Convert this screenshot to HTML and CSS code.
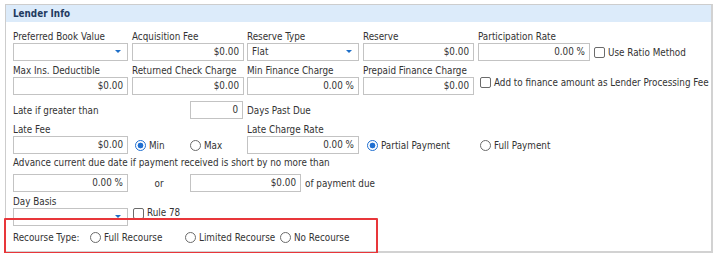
FILE: index.html
```html
<!DOCTYPE html>
<html>
<head>
<meta charset="utf-8">
<link rel="stylesheet" href="styles.css">
</head>
<body>
<div class="panel">
  <div class="panel-head">Lender Info</div>
  <div class="panel-body">
    <div class="grid5 row1">
      <div class="field"><div class="lbl">Preferred Book Value</div><div class="input select w115"><span class="arrow"></span></div></div>
      <div class="field"><div class="lbl">Acquisition Fee</div><div class="input num w112">$0.00</div></div>
      <div class="field"><div class="lbl">Reserve Type</div><div class="input select w112">Flat<span class="arrow"></span></div></div>
      <div class="field"><div class="lbl">Reserve</div><div class="input num w111">$0.00</div></div>
      <div class="field"><div class="lbl">Participation Rate</div><div class="inline"><div class="input num w112">0.00 %</div><span class="check ml4"></span><span class="opt">Use Ratio Method</span></div></div>
    </div>
    <div class="grid5 row2">
      <div class="field"><div class="lbl">Max Ins. Deductible</div><div class="input num w115">$0.00</div></div>
      <div class="field"><div class="lbl">Returned Check Charge</div><div class="input num w112">$0.00</div></div>
      <div class="field"><div class="lbl">Min Finance Charge</div><div class="input num w112">0.00 %</div></div>
      <div class="field"><div class="lbl">Prepaid Finance Charge</div><div class="input num w111">$0.00</div></div>
      <div class="field"><div class="lbl">&nbsp;</div><div class="inline"><span class="check ml2"></span><span class="opt">Add to finance amount as Lender Processing Fee</span></div></div>
    </div>
    <div class="inline row3">
      <span class="lead">Late if greater than</span>
      <div class="input num w53">0</div>
      <span class="after">Days Past Due</span>
    </div>
    <div class="grid5 row4">
      <div class="field"><div class="lbl">Late Fee</div><div class="input num w115">$0.00</div></div>
      <div class="radios">
        <span class="radio on ml3"></span><span class="opt w41">Min</span>
        <span class="radio"></span><span class="opt">Max</span>
      </div>
      <div class="field"><div class="lbl">Late Charge Rate</div><div class="input num w112">0.00 %</div></div>
      <div class="radios"><span class="radio on ml4"></span><span class="opt">Partial Payment</span></div>
      <div class="radios"><span class="radio ml2"></span><span class="opt">Full Payment</span></div>
    </div>
    <div class="lbl row5">Advance current due date if payment received is short by no more than</div>
    <div class="inline row5b">
      <div class="input num w115">0.00 %</div>
      <span class="or">or</span>
      <div class="input num w111">$0.00</div>
      <span class="after">of payment due</span>
    </div>
    <div class="lbl row6">Day Basis</div>
    <div class="inline top">
      <div class="input select w115"><span class="arrow"></span></div>
      <span class="check ml5"></span><span class="opt lh10">Rule 78</span>
    </div>
    <div class="inline row7">
      <span class="rt">Recourse Type:</span>
      <span class="radio"></span><span class="opt w81">Full Recourse</span>
      <span class="radio"></span><span class="opt w81">Limited Recourse</span>
      <span class="radio"></span><span class="opt">No Recourse</span>
    </div>
  </div>
  <div class="highlight"></div>
</div>
</body>
</html>
```
FILE: styles.css
```css
* { box-sizing: border-box; }
html, body { margin: 0; padding: 0; background: #fff; }
body {
  font-family: "DejaVu Sans Condensed", "DejaVu Sans", sans-serif;
  font-size: 9.8px;
  color: #333;
}
.panel {
  position: relative;
  margin: 4px 0 0 5px;
  width: 708px;
  height: 249px;
  border: 1px solid #cdcdcd;
  border-right: 2px solid #d2d2d2;
  border-bottom: 2px solid #d2d2d2;
}
.panel-head {
  height: 17px;
  line-height: 17px;
  padding-left: 7px;
  background: #dcebfa;
  color: #1f3a60;
  font-weight: bold;
}
.panel-body { padding: 9px 0 0 7px; }
.grid5 {
  display: grid;
  grid-template-columns: 119px 115px 116px 115px auto;
}
.field { display: flex; flex-direction: column; }
.lbl { height: 12px; line-height: 12px; white-space: nowrap; }
.input {
  height: 18px;
  line-height: 16px;
  border: 1px solid #c3c3c3;
  background: #fff;
  padding: 0 4px;
  position: relative;
  white-space: nowrap;
}
.num { text-align: right; }
.select { text-align: left; }
.arrow {
  position: absolute;
  right: 6px;
  top: 6px;
  width: 0; height: 0;
  border-left: 3px solid transparent;
  border-right: 3px solid transparent;
  border-top: 3px solid #1e6fc8;
}
.w115 { width: 115px; }
.w112 { width: 112px; }
.w111 { width: 111px; }
.w53 { width: 53px; }
.inline { display: flex; align-items: center; white-space: nowrap; }
.inline.top { align-items: flex-start; }
.lh10 { line-height: 10px; }
.check {
  width: 11px; height: 11px;
  border: 1px solid #6b6b6b;
  border-radius: 2px;
  background: #fff;
  flex: none;
}
.radio {
  width: 11px; height: 11px;
  border: 1px solid #6b6b6b;
  border-radius: 50%;
  background: #fff;
  flex: none;
}
.radio.on {
  border-color: #1f6fd1;
  background: radial-gradient(circle, #1f6fd1 0 2.6px, #fff 3.2px);
}
.opt { margin-left: 3px; }
.ml2 { margin-left: 2px; }
.ml3 { margin-left: 3px; }
.ml4 { margin-left: 4px; }
.ml5 { margin-left: 5px; }
.w41 { width: 41px; }
.w81 { width: 81px; }
.row2 { margin-top: 4px; }
.row3 { margin-top: 6px; }
.lead { width: 177px; }
.after { margin-left: 4px; }
.row4 { margin-top: 5px; }
.radios { display: flex; align-items: center; align-self: end; height: 18px; }
.row5 { margin-top: 3px; }
.row5b { margin-top: 5px; }
.or { width: 62px; text-align: center; }
.row6 { margin-top: 4px; }
.row7 { margin-top: 5px; height: 12px; }
.rt { width: 77px; }
.highlight {
  position: absolute;
  left: -2px;
  top: 213px;
  width: 374px;
  height: 36px;
  border: 2px solid #e8363a;
  border-radius: 1px;
}
```
